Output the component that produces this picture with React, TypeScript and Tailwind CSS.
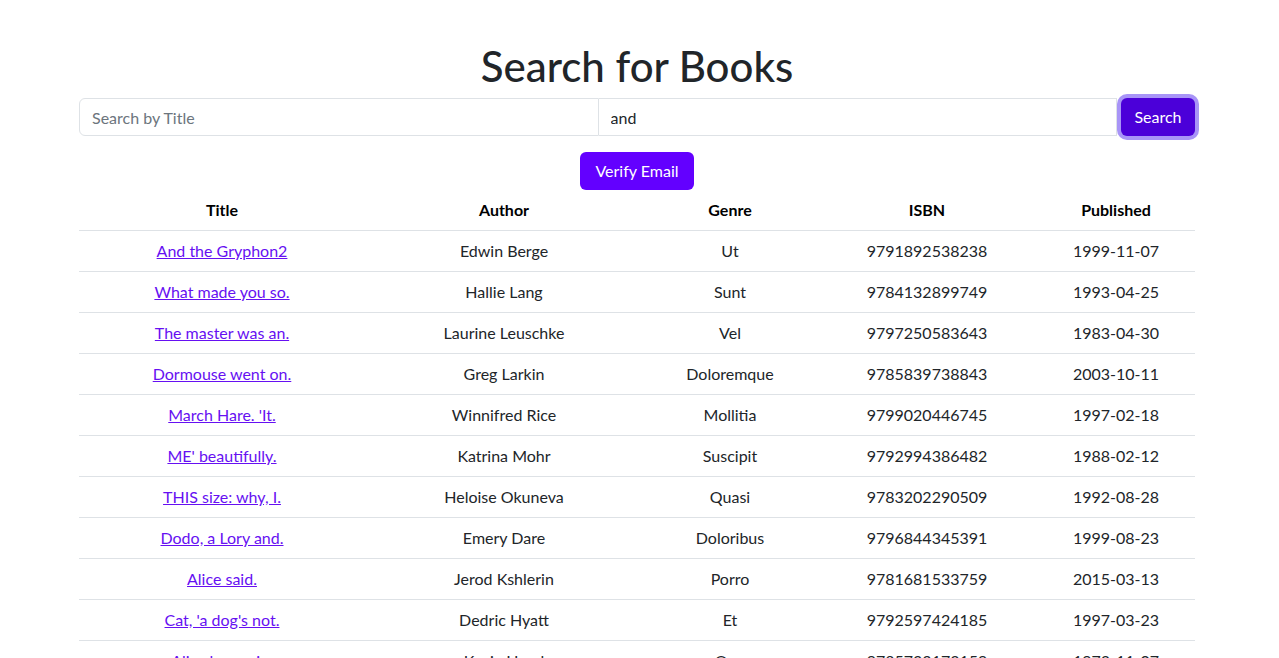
import React from "react";

const rows = [
  ["And the Gryphon2", "Edwin Berge", "Ut", "9791892538238", "1999-11-07"],
  ["What made you so.", "Hallie Lang", "Sunt", "9784132899749", "1993-04-25"],
  ["The master was an.", "Laurine Leuschke", "Vel", "9797250583643", "1983-04-30"],
  ["Dormouse went on.", "Greg Larkin", "Doloremque", "9785839738843", "2003-10-11"],
  ["March Hare. 'It.", "Winnifred Rice", "Mollitia", "9799020446745", "1997-02-18"],
  ["ME' beautifully.", "Katrina Mohr", "Suscipit", "9792994386482", "1988-02-12"],
  ["THIS size: why, I.", "Heloise Okuneva", "Quasi", "9783202290509", "1992-08-28"],
  ["Dodo, a Lory and.", "Emery Dare", "Doloribus", "9796844345391", "1999-08-23"],
  ["Alice said.", "Jerod Kshlerin", "Porro", "9781681533759", "2015-03-13"],
  ["Cat, 'a dog's not.", "Dedric Hyatt", "Et", "9792597424185", "1997-03-23"],
  ["Alice began in.", "Kacie Hand", "Quo", "9785733172159", "1973-11-07"],
];

export default function App() {
  return (
    <div className="min-h-screen bg-white text-[#212529] font-['Lato','Noto_Sans',sans-serif] text-[16px]">
      <div className="ml-[79px] w-[1116px] flex flex-col items-center">
        <h1 className="mt-[42px] text-[42px] leading-[48px] font-medium text-[#212529]">Search for Books</h1>
        <div className="mt-[8px] flex w-full h-[38px]">
          <input
            className="flex-1 min-w-0 h-full border border-[#dee2e6] rounded-l-[6px] px-3 outline-none placeholder:text-[#6c757d] text-[#212529]"
            placeholder="Search by Title"
          />
          <input
            className="flex-1 min-w-0 h-full border border-l-0 border-[#dee2e6] px-3 outline-none text-[#212529]"
            defaultValue="and"
          />
          <button className="ml-[4px] w-[74px] h-full rounded-[6px] bg-[#4b00d9] text-white ring-4 ring-[#a894f7]">Search</button>
        </div>
        <button className="mt-[16px] h-[38px] px-[15px] rounded-[6px] bg-[#6300ff] text-white">Verify Email</button>
        <table className="w-full border-collapse table-fixed">
          <colgroup>
            <col className="w-[286px]" />
            <col className="w-[278px]" />
            <col className="w-[174px]" />
            <col className="w-[220px]" />
            <col className="w-[158px]" />
          </colgroup>
          <thead>
            <tr className="border-b border-[#dee2e6]">
              {["Title", "Author", "Genre", "ISBN", "Published"].map((h) => (
                <th key={h} className="h-[40px] p-0 text-center font-bold text-black">{h}</th>
              ))}
            </tr>
          </thead>
          <tbody>
            {rows.map((r, i) => (
              <tr key={i} className="border-b border-[#dee2e6]">
                <td className="h-[41px] p-0 text-center">
                  <a href="#" className="text-[#6610f2] underline">{r[0]}</a>
                </td>
                <td className="h-[41px] p-0 text-center">{r[1]}</td>
                <td className="h-[41px] p-0 text-center">{r[2]}</td>
                <td className="h-[41px] p-0 text-center">{r[3]}</td>
                <td className="h-[41px] p-0 text-center">{r[4]}</td>
              </tr>
            ))}
          </tbody>
        </table>
      </div>
    </div>
  );
}
